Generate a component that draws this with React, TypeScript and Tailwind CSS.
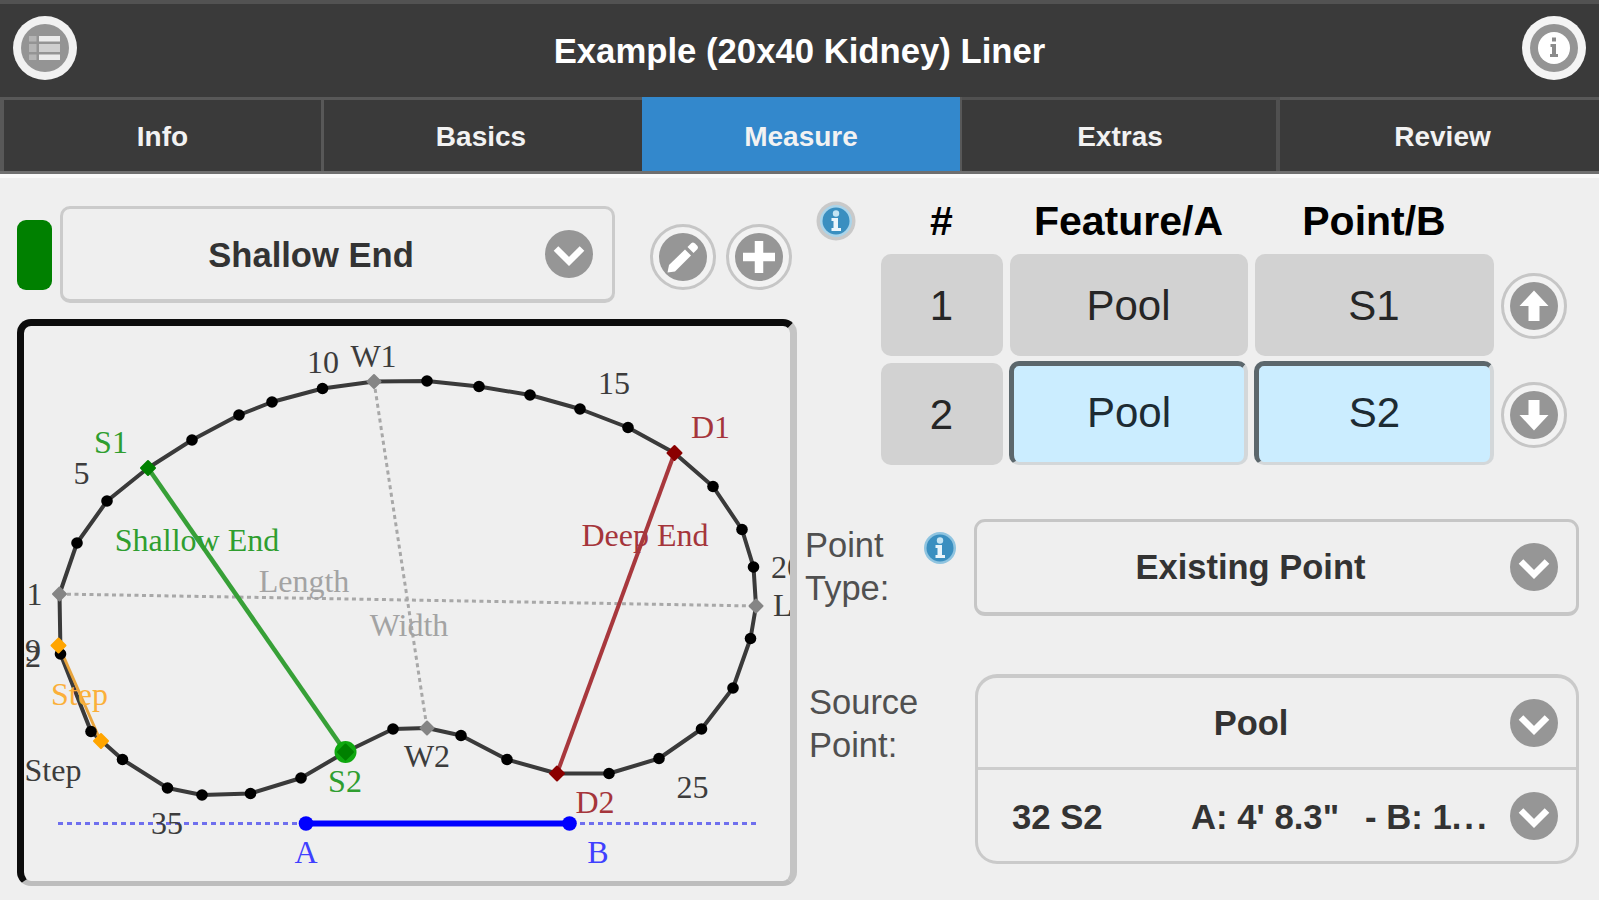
import React from "react";

type Pt = { x: number; y: number; kind?: "gray" | "green" | "red" | "big" };

const outline: Pt[] = [
  { x: 59.5, y: 594, kind: "gray" },
  { x: 77, y: 543 },
  { x: 107, y: 501 },
  { x: 148, y: 468, kind: "green" },
  { x: 192, y: 440 },
  { x: 239, y: 415 },
  { x: 272, y: 402 },
  { x: 322.5, y: 388.5 },
  { x: 374, y: 381.5, kind: "gray" },
  { x: 427, y: 381 },
  { x: 479, y: 386.5 },
  { x: 530, y: 395 },
  { x: 580, y: 409 },
  { x: 628, y: 427.5 },
  { x: 674.5, y: 453, kind: "red" },
  { x: 713, y: 486.5 },
  { x: 742, y: 529.5 },
  { x: 753.5, y: 567 },
  { x: 756, y: 606, kind: "gray" },
  { x: 750.5, y: 638.5 },
  { x: 733, y: 688 },
  { x: 701.5, y: 729 },
  { x: 659, y: 758.5 },
  { x: 609, y: 773.5 },
  { x: 557, y: 773.5, kind: "red" },
  { x: 507, y: 759.5 },
  { x: 461, y: 735.5 },
  { x: 427, y: 728, kind: "gray" },
  { x: 393, y: 729 },
  { x: 345.5, y: 752, kind: "big" },
  { x: 301, y: 778 },
  { x: 250.5, y: 793.5 },
  { x: 202, y: 795 },
  { x: 167.5, y: 788 },
  { x: 122.5, y: 759.5 },
  { x: 91, y: 731.5 },
  { x: 60.5, y: 654 },
];

type Label = { t: string; x: number; y: number; c: string; a?: "start" | "end" };

const DARK = "#3c3c3c";
const GRAY = "#a3a3a3";
const GREEN = "#2f9e2f";
const RED = "#a5353b";
const BLUE = "#4040ff";
const ORANGE = "#fbb03a";

const labels: Label[] = [
  { t: "5", x: 81.5, y: 484, c: DARK },
  { t: "10", x: 323, y: 373, c: DARK },
  { t: "W1", x: 373.5, y: 366.5, c: DARK },
  { t: "15", x: 614, y: 394, c: DARK },
  { t: "20", x: 771, y: 578, c: DARK, a: "start" },
  { t: "L2", x: 773, y: 616, c: DARK, a: "start" },
  { t: "25", x: 692.5, y: 797.5, c: DARK },
  { t: "W2", x: 427, y: 766.5, c: DARK },
  { t: "35", x: 167, y: 834, c: DARK },
  { t: "Step", x: 24.5, y: 780.5, c: DARK, a: "start" },
  { t: "1", x: 42.5, y: 604.5, c: DARK, a: "end" },
  { t: "39", x: 41, y: 661, c: DARK, a: "end" },
  { t: "Step 2", x: 41, y: 667, c: DARK, a: "end" },
  { t: "Length", x: 304, y: 592, c: GRAY },
  { t: "Width", x: 409, y: 636, c: GRAY },
  { t: "S1", x: 111, y: 453, c: GREEN },
  { t: "S2", x: 345, y: 792, c: GREEN },
  { t: "Shallow End", x: 197, y: 550.5, c: GREEN },
  { t: "D1", x: 710.5, y: 438, c: RED },
  { t: "D2", x: 595, y: 812.5, c: RED },
  { t: "Deep End", x: 645, y: 545.5, c: RED },
  { t: "Step", x: 79.5, y: 705, c: ORANGE },
  { t: "A", x: 306, y: 863, c: BLUE },
  { t: "B", x: 598, y: 863, c: BLUE },
];

function Diamond({ x, y, r, fill }: { x: number; y: number; r: number; fill: string }) {
  return (
    <polygon
      points={`${x - r},${y} ${x},${y - r} ${x + r},${y} ${x},${y + r}`}
      fill={fill}
      stroke={fill}
      strokeWidth="2"
      strokeLinejoin="round"
    />
  );
}

function PoolPlan() {
  return (
    <svg
      viewBox="24 326 766 555"
      className="block h-full w-full"
      fontFamily="'Liberation Serif', serif"
      fontSize="32"
    >
      <g fill="none">
        <polygon
          points={outline.map((p) => `${p.x},${p.y}`).join(" ")}
          stroke="#3a3a3a"
          strokeWidth="4"
          strokeLinejoin="round"
        />
        <g stroke="#a8a8a8" strokeWidth="3" strokeDasharray="4 3.5">
          <path d="M59.5 594L756 606" />
          <path d="M374 381.5L427 728" />
        </g>
        <path d="M148 468L345.5 752" stroke="#37a037" strokeWidth="4.5" />
        <path d="M674.5 453L557 773.5" stroke="#a8383d" strokeWidth="4" />
        <path d="M59 646L101 742" stroke="#e8a43c" strokeWidth="3" />
        <path d="M58 823.5H757" stroke="#6f6fee" strokeWidth="3" strokeDasharray="5 4" />
        <path d="M306 823.5H569.5" stroke="#0000ff" strokeWidth="6" />
      </g>
      {labels.map((l, i) => (
        <text key={i} x={l.x} y={l.y} fill={l.c} textAnchor={l.a ?? "middle"}>
          {l.t}
        </text>
      ))}
      {outline.map((p, i) => {
        if (p.kind === "gray") return <Diamond key={i} x={p.x} y={p.y} r={6.5} fill="#858585" />;
        if (p.kind === "green") return <Diamond key={i} x={p.x} y={p.y} r={7} fill="#008000" />;
        if (p.kind === "red") return <Diamond key={i} x={p.x} y={p.y} r={7} fill="#8b0000" />;
        if (p.kind === "big")
          return (
            <g key={i}>
              <circle cx={p.x} cy={p.y} r="11" fill="#0fa80f" />
              <Diamond x={p.x} y={p.y} r={7.5} fill="#008000" />
            </g>
          );
        return <circle key={i} cx={p.x} cy={p.y} r="5.8" fill="#000" />;
      })}
      <Diamond x={58.5} y={645.5} r={7} fill="#ffa500" />
      <Diamond x={101} y={741} r={7} fill="#ffa500" />
      <circle cx="306" cy="823.5" r="7.3" fill="#0000ff" />
      <circle cx="569.5" cy="823.5" r="7.3" fill="#0000ff" />
    </svg>
  );
}

function ChevronDisc() {
  return (
    <svg viewBox="0 0 48 48" className="block size-12 shrink-0">
      <circle cx="24" cy="24" r="24" fill="#969696" />
      <path d="M11 18.500L24 31.500L37 18.500" fill="none" stroke="#fff" strokeWidth="6.5" />
    </svg>
  );
}

function RoundButton({ icon }: { icon: "edit" | "plus" | "up" | "down" }) {
  return (
    <svg viewBox="0 0 66 66" className="block size-[66px] shrink-0">
      <circle cx="33" cy="33" r="31.5" fill="#f2f2f2" stroke="#c6c6c6" strokeWidth="3" />
      <circle cx="33" cy="33" r="24" fill="#969696" />
      {icon === "edit" && (
        <g fill="#fff">
          <path d="M17.500 48.500L19 41L35 25.500L41 31.500L25 47.500Z" />
          <path d="M37.500 23L41.500 19Q43 18 45 19.500L47.500 22Q48.500 23.500 47.500 25L43.500 29Z" />
        </g>
      )}
      {icon === "plus" && <path d="M17 33H49M33 17V49" stroke="#fff" strokeWidth="8.5" />}
      {icon === "up" && <path d="M33 17.500L47.500 33H38.500V48H27.500V33H18.500Z" fill="#fff" />}
      {icon === "down" && <path d="M33 48.500L47.500 33H38.500V18H27.500V33H18.500Z" fill="#fff" />}
    </svg>
  );
}

function BlueInfo({ ring = false }: { ring?: boolean }) {
  return (
    <svg viewBox="0 0 40 40" className="block size-10 shrink-0">
      {ring && <circle cx="20" cy="20" r="19.500" fill="#c9c9c9" />}
      <circle cx="20" cy="20" r="16" fill={ring ? "#a9d4ea" : "#8fc4e0"} />
      <circle cx="20" cy="20" r="13.500" fill="#3a8fc0" />
      <path d="M15.500 17H22V27H25V30H15.500V27H17.500V20H15.500Z" fill="#eaf5fb" />
      <circle cx="20" cy="12.500" r="3.200" fill="#c4e4f3" />
    </svg>
  );
}

function MenuButton() {
  return (
    <svg viewBox="0 0 66 66" className="block size-[66px]">
      <circle cx="33" cy="33" r="32" fill="#f1f1f1" />
      <circle cx="33" cy="33" r="24" fill="#949494" />
      <g fill="#ececec">
        <rect x="27" y="21" width="21" height="5.500" />
        <rect x="27" y="29" width="21" height="8" fill="#cfcfcf" />
        <rect x="27" y="39.500" width="21" height="5.500" />
      </g>
      <g fill="#b4b4b4">
        <rect x="17" y="21" width="7.500" height="5.500" />
        <rect x="17" y="29" width="7.500" height="8" />
        <rect x="17" y="39.500" width="7.500" height="5.500" />
      </g>
    </svg>
  );
}

function HeaderInfoButton() {
  return (
    <svg viewBox="0 0 66 66" className="block size-[66px]">
      <circle cx="33" cy="33" r="32" fill="#f4f4f4" />
      <circle cx="33" cy="33" r="24" fill="#949494" />
      <circle cx="33" cy="33" r="16" fill="#fff" />
      <g fill="#8b8b8b">
        <rect x="31" y="22.500" width="4" height="4" />
        <path d="M29.500 29H35V39H37V42H29V39H31V32H29.500Z" />
      </g>
    </svg>
  );
}

const cell = "flex h-full items-center justify-center rounded-[10px] bg-[#d2d2d2] pr-px text-[42px] text-[#262626]";
const picked =
  "-ml-[1px] -mt-[2px] flex items-center justify-center rounded-[10px] border-b-[3px] border-l-[5px] border-r-[4px] border-t-[5px] border-b-[#d3d7d9] border-l-[#5c676c] border-r-[#d3d7d9] border-t-[#5c676c] bg-[#cbedff] pb-[3px] text-[42px] text-[#1d2b33]";

export default function App() {
  return (
    <div className="flex h-[900px] w-[1599px] flex-col overflow-hidden bg-[#efefef] font-['Liberation_Sans',sans-serif]">
      <header className="flex h-[97px] shrink-0 items-start justify-between border-t-4 border-[#525252] bg-[#3a3a3a] pl-3 pr-[21px] pt-[11px]">
        <MenuButton />
        <h1 className="pt-[17px] text-[34.700px] font-bold leading-[39px] text-white">Example (20x40 Kidney) Liner</h1>
        <div className="-mr-[9px]">
          <HeaderInfoButton />
        </div>
      </header>
      <nav className="grid h-[77px] shrink-0 grid-cols-[324px_318px_320px_318px_1fr] border-b-[3px] border-b-[#6f6f6f] bg-[#3a3a3a] text-[28px] font-bold text-[#f2f2f2]">
        <div className="flex items-center justify-center border-l-4 border-r-[3px] border-t-[3px] border-[#585858] pt-[2px]">Info</div>
        <div className="flex items-center justify-center border-t-[3px] border-[#585858] pr-1 pt-[2px]">Basics</div>
        <div className="flex items-center justify-center border-r-[2px] border-[#585858] bg-[#3388cc] pt-[5px]">Measure</div>
        <div className="flex items-center justify-center border-r-[4px] border-t-[3px] border-[#505050] pl-[2px] pt-[2px]">Extras</div>
        <div className="flex items-center justify-center border-t-[3px] border-[#585858] pl-[6px] pt-[2px]">Review</div>
      </nav>

      <main className="flex flex-1 border-t-4 border-[#f9f9f9]">
        <section className="w-[797px] shrink-0 pl-4 pt-7">
          <div className="flex h-[97px] items-center">
            <div className="ml-px h-[70px] w-[35px] rounded-[9px] bg-[#008000]" />
            <div className="ml-[8px] flex h-[97px] w-[555px] items-center rounded-[10px] border-[3px] border-b-4 border-[#cbcbcb] pr-[19px]">
              <span className="flex-1 pl-[14px] pt-[3px] text-center text-[34.600px] font-bold text-[#333]">Shallow End</span>
              <ChevronDisc />
            </div>
            <div className="ml-[35px] mt-[5px] flex gap-[10px]">
              <RoundButton icon="edit" />
              <RoundButton icon="plus" />
            </div>
          </div>
          <div className="ml-px mt-4 h-[567px] w-[780px] overflow-hidden rounded-[14px] border-b-[5px] border-l-[7px] border-r-[7px] border-t-[7px] border-b-[#bdbdbd] border-l-[#0c0c0c] border-r-[#c4c4c4] border-t-[#0c0c0c]">
            <PoolPlan />
          </div>
        </section>

        <section className="flex-1">
          <div className="flex pl-[19px] pt-[23px]">
            <BlueInfo ring />
            <div className="ml-[25px] grid grid-cols-[122px_238px_239px_66px] grid-rows-[46px_102px_102px] gap-[7px]">
              <div className="flex h-10 items-center justify-center pr-px text-[41px] font-bold leading-10 text-black">#</div>
              <div className="flex h-10 items-center justify-center pr-px text-[41px] font-bold leading-10 text-black">Feature/A</div>
              <div className="flex h-10 items-center justify-center pr-px text-[41px] font-bold leading-10 text-black">Point/B</div>
              <div />
              <div className={cell}>1</div>
              <div className={cell}>Pool</div>
              <div className={cell}>S1</div>
              <div className="flex items-center pt-px">
                <RoundButton icon="up" />
              </div>
              <div className={cell}>2</div>
              <div className={picked}>Pool</div>
              <div className={picked}>S2</div>
              <div className="flex items-center pt-px">
                <RoundButton icon="down" />
              </div>
            </div>
          </div>

          <div className="mt-[54px] flex items-start">
            <div className="w-[123px] pl-2 pt-[5px] text-[34.500px] leading-[43px] text-[#505050]">
              Point Type:
            </div>
            <div className="pt-[9px]">
              <BlueInfo />
            </div>
            <div className="ml-[14px] flex h-[97px] w-[605px] items-center rounded-[11px] border-[3px] border-b-4 border-[#c6c6c6] pr-[18px]">
              <span className="flex-1 pl-[14px] pt-px text-center text-[34.500px] font-bold text-[#333]">Existing Point</span>
              <ChevronDisc />
            </div>
          </div>

          <div className="mt-[58px] flex items-start">
            <div className="w-[178px] pl-3 pr-8 pt-[7px] text-[34.500px] leading-[43px] text-[#505050]">
              Source Point:
            </div>
            <div className="flex h-[190px] w-[604px] flex-col rounded-[22px] border-[3px] border-t-4 border-[#cacaca]">
              <div className="flex h-[92px] items-center border-b-[3px] border-[#cdcdcd] pr-[18px]">
                <span className="flex-1 pl-[14px] pt-[2px] text-center text-[34.500px] font-bold text-[#333]">Pool</span>
                <ChevronDisc />
              </div>
              <div className="flex flex-1 items-center pl-[34px] pr-[18px] text-[34.700px] font-bold text-[#333]">
                <span className="w-[179px] pt-[3px]">32 S2</span>
                <span className="w-[174px] pt-[3px]">A: 4' 8.3"</span>
                <span className="flex-1 pt-[3px]">
                  - B: 1<span className="tracking-[3px]">...</span>
                </span>
                <ChevronDisc />
              </div>
            </div>
          </div>
        </section>
      </main>
    </div>
  );
}
